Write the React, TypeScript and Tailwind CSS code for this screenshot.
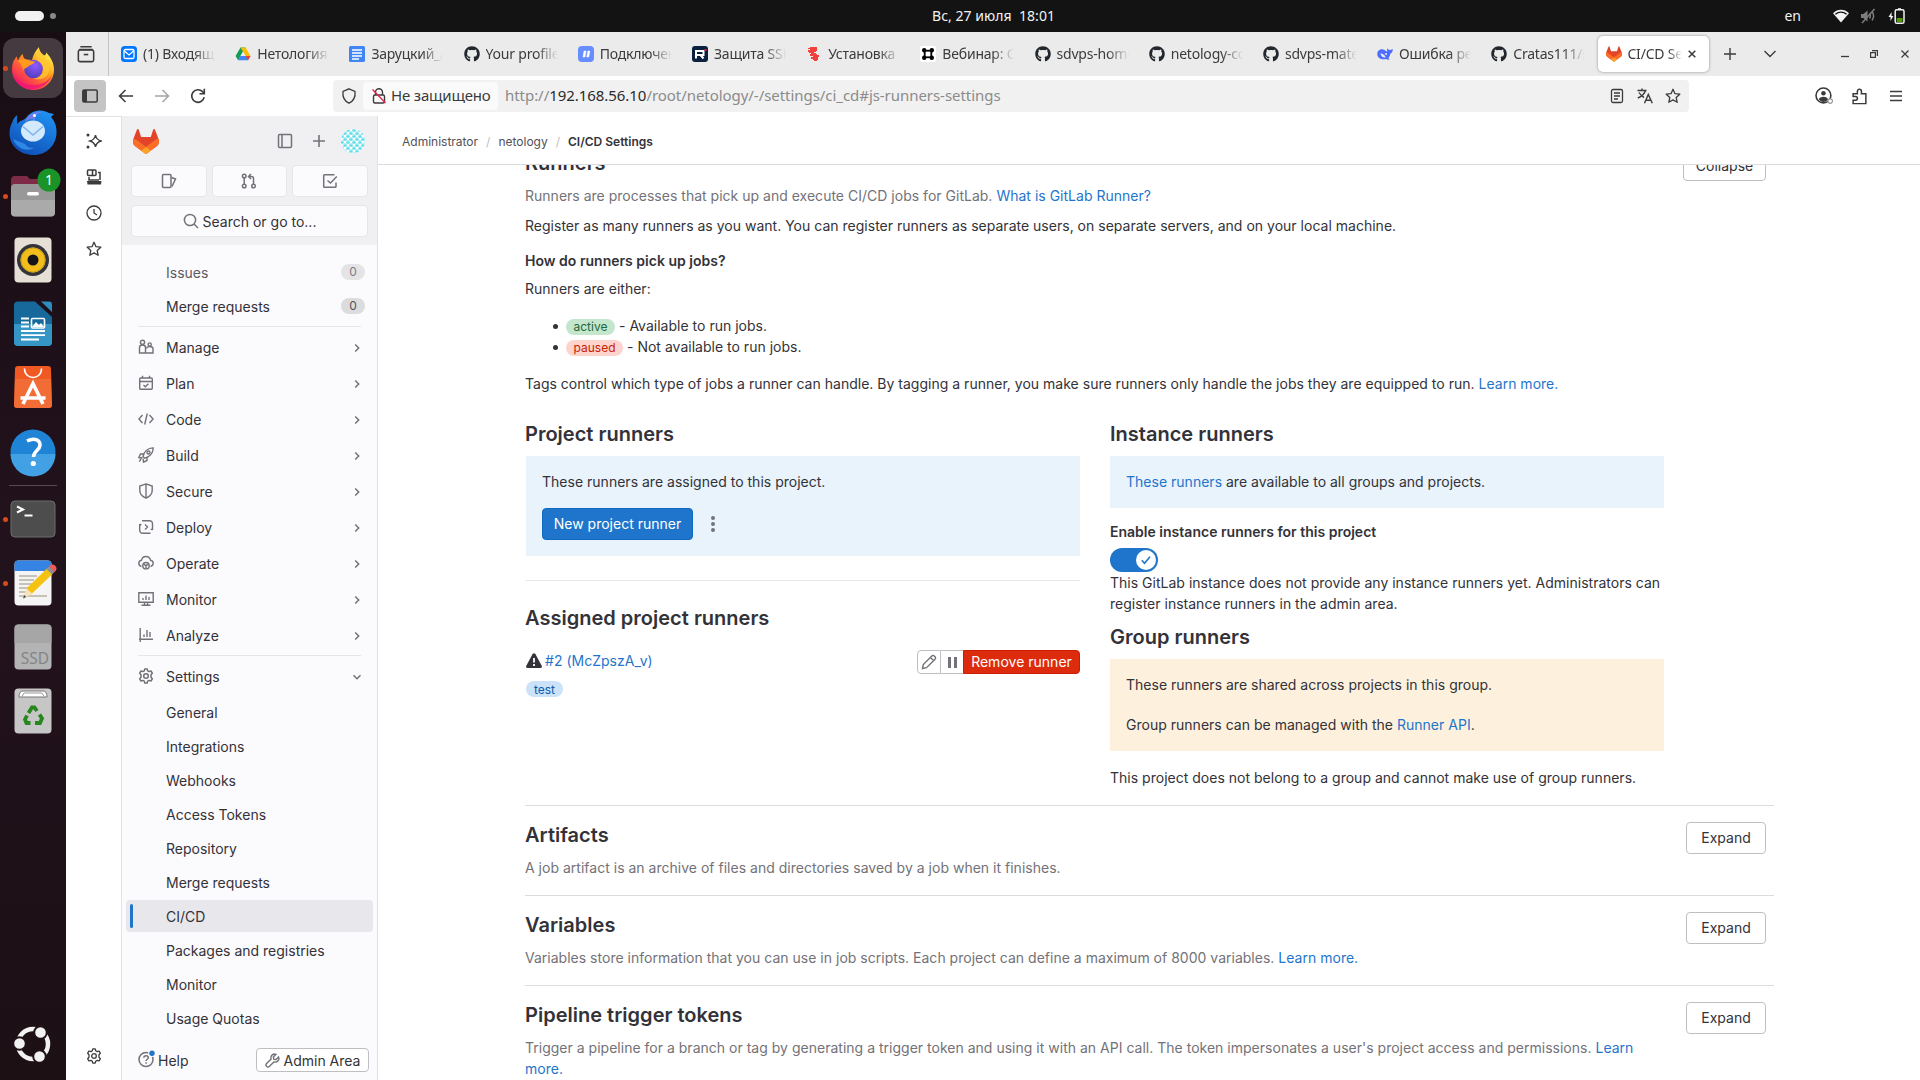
import React from 'react';
import { FaGithub } from 'react-icons/fa';

type Kids = { children?: React.ReactNode };

/* ---------- small helpers ---------- */

function Ico({ children, s = 16, c = '', w = 1.5, vb = '0 0 16 16' }: Kids & { s?: number; c?: string; w?: number; vb?: string }) {
  return (
    <svg width={s} height={s} viewBox={vb} fill="none" stroke="currentColor" strokeWidth={w} className={'shrink-0 ' + c}>
      {children}
    </svg>
  );
}

function Tanuki({ w, h }: { w: number; h: number }) {
  return (
    <svg width={w} height={h} viewBox="0 0 25 24" className="shrink-0">
      <path d="m24.507 9.5-.034-.09L21.082.562a.896.896 0 0 0-1.694.091l-2.29 7.01H7.825L5.535.653a.898.898 0 0 0-1.694-.09L.451 9.411.416 9.5a6.297 6.297 0 0 0 2.09 7.278l.012.01.03.022 5.16 3.867 2.56 1.935 1.554 1.176a1.051 1.051 0 0 0 1.268 0l1.555-1.176 2.56-1.935 5.197-3.89.014-.01A6.297 6.297 0 0 0 24.507 9.5Z" fill="#E24329" />
      <path d="m24.507 9.5-.034-.09a11.44 11.44 0 0 0-4.56 2.051l-7.447 5.632 4.742 3.584 5.197-3.89.014-.01A6.297 6.297 0 0 0 24.507 9.5Z" fill="#FC6D26" />
      <path d="m7.707 20.677 2.56 1.935 1.555 1.176a1.051 1.051 0 0 0 1.268 0l1.555-1.176 2.56-1.935-4.743-3.584-4.755 3.584Z" fill="#FCA326" />
      <path d="M5.01 11.461a11.43 11.43 0 0 0-4.56-2.05L.416 9.5a6.297 6.297 0 0 0 2.09 7.278l.012.01.03.022 5.16 3.867 4.745-3.584-7.444-5.632Z" fill="#FC6D26" />
    </svg>
  );
}

/* ---------- desktop top bar ---------- */

function TopBar() {
  return (
    <div className="relative flex h-8 shrink-0 items-center justify-between bg-[#131313] pl-[15px] pr-[15px] text-[14px] text-[#f2f2f2]">
      <div className="flex items-center gap-[6px]">
        <div className="h-[10px] w-[29px] rounded-full bg-[#f2f2f2]" />
        <div className="size-[6px] rounded-full bg-[#8a8a8a]" />
      </div>
      <div className="absolute left-[932px] top-[5px] whitespace-pre tracking-[0.04px]">Вс, 27 июля  18:01</div>
      <div className="flex items-center">
        <span className="mb-[2px] mr-[31px] text-[14px]">en</span>
        <svg width="18" height="16" viewBox="0 0 18 16" className="mr-[10px]">
          <path d="M1 5.2C5.500.6 12.500.6 17 5.200L9 14.500Z" fill="#f2f2f2" />
          <path d="M3.400 6.200c3.300-2.800 7.900-2.800 11.200 0" stroke="#131313" strokeWidth="1.300" fill="none" />
        </svg>
        <svg width="16" height="16" viewBox="0 0 16 16" className="mr-[12px]" fill="none" stroke="#7d7d7d" strokeWidth="1.500">
          <path d="M1 6h2.500L7.500 2.500v11L3.500 10H1Z" fill="#7d7d7d" stroke="none" />
          <path d="M9.500 5.500c1 1.600 1 3.400 0 5M12 3.500c2 2.800 2 6.200 0 9" />
          <path d="M14.500 1 2 15" />
        </svg>
        <svg width="17" height="18" viewBox="0 0 17 18" fill="none">
          <path d="M3.600 5 .5 10h2v4L5.300 9H3.500Z" fill="#f2f2f2" />
          <path d="M10 1.200h3v1.500h-3z" fill="#f2f2f2" />
          <rect x="7.200" y="2.700" width="8.800" height="13.600" rx="1.600" stroke="#f2f2f2" strokeWidth="1.500" />
          <rect x="8.700" y="11" width="5.800" height="4" fill="#4e9a06" />
        </svg>
      </div>
    </div>
  );
}

/* ---------- dock ---------- */

function DockItem({ children, dot, active }: Kids & { dot?: boolean; active?: boolean }) {
  return (
    <div className="relative flex h-16 w-full shrink-0 items-center justify-center">
      {active && <div className="absolute left-[3px] top-[2px] size-[60px] rounded-[12px] bg-[#463a41]" />}
      {dot && <div className="absolute left-[3px] top-[30px] size-[5px] rounded-full bg-[#d84a1b]" />}
      <svg width="48" height="48" viewBox="0 0 48 48" className="relative overflow-visible" fill="none">
        {children}
      </svg>
    </div>
  );
}

function Dock() {
  return (
    <div className="flex w-[66px] shrink-0 flex-col bg-linear-to-b from-[#190d14] via-[#22121c] to-[#1c1015] pt-[4px]">
      <DockItem dot active>
        <defs>
          <linearGradient id="ffa" x1="38" y1="8" x2="10" y2="42" gradientUnits="userSpaceOnUse">
            <stop offset="0" stopColor="#fff04a" />
            <stop offset=".35" stopColor="#ffa31a" />
            <stop offset=".65" stopColor="#ff5a3c" />
            <stop offset="1" stopColor="#f0156a" />
          </linearGradient>
          <radialGradient id="ffb" cx=".6" cy=".3" r=".8">
            <stop offset="0" stopColor="#9059ff" />
            <stop offset="1" stopColor="#4a3bb5" />
          </radialGradient>
        </defs>
        <path d="M30 3c-.5 4 2.500 6 5 8.500 1.800-.3 2-1.500 2.300-3 4.500 5 7.700 10.500 7.700 17C45 37.500 35.500 46 24.500 46S3 37.500 3 25.500C3 19 5.500 14.500 8 12.500c0 2 .5 3 1 4C10 14 11.500 11.500 14 10c-.3 2 .5 4.500 3 5.500l6 .5c1-4 3-9 7-13Z" fill="url(#ffa)" />
        <path d="M4 31c3 9 10.500 14 19 14 10 0 18-6.500 20.500-15C40 37 33 41 25 41S9 38 4 31Z" fill="#f0147a" opacity=".75" />
        <circle cx="24.500" cy="25" r="9.300" fill="url(#ffb)" />
        <path d="M9 16.500c4-2 9-1.500 12 .5l5 .5c-1 3-4.500 3-6 4.500-2 1.800-4 2-6 4 0-4-2.500-6-5-9.500Z" fill="#ff9a1f" />
        <path d="M29 17c4 2 6 6 5 10-1 4.500-5 7.500-9.500 7.500 8 3 16-2 16-11C40 16 33 14 30 4c-3 4-3.500 9-1 13Z" fill="#ffc936" opacity=".75" />
      </DockItem>
      <DockItem>
        <defs>
          <linearGradient id="tb" x1="36" y1="4" x2="14" y2="46" gradientUnits="userSpaceOnUse">
            <stop offset="0" stopColor="#1f8ff0" />
            <stop offset="1" stopColor="#0f50b8" />
          </linearGradient>
        </defs>
        <path d="M17 10C22 2 33 .5 40 5l5 1-3 3c4 4.500 6 10 5.500 17C46.500 38 37 47 25 47 11 47 1 38 .5 26c0-5 1-9 3-12 .5-2.500 2-5 5-7-1 2.500-.3 6-.3 9l3-3C13 13 15 11.500 17 10Z" fill="url(#tb)" />
        <path d="M17 11C21 5 29 3 34 4c-6 1-9 4-8 8-4-2-7-1-10 3Z" fill="#8a7be8" opacity=".8" />
        <circle cx="25.500" cy="7.500" r="1.500" fill="#fff" />
        <ellipse cx="24" cy="23" rx="12" ry="10.500" fill="#d3e9fd" />
        <path d="M14 18.500 24 27l10-8.500" stroke="#7fb4ea" strokeWidth="1.600" />
        <path d="M4 31c4 10 14 13 21 9-4 0-7-1-9-4" fill="#3c9df5" opacity=".7" />
      </DockItem>
      <DockItem dot>
        <path d="M2 8q0-4 4-4h12l3 3h18q4 0 4 4v12H2Z" fill="#7d2b46" />
        <rect x="2" y="12" width="44" height="32.500" rx="4" fill="#989898" />
        <path d="M2 28h44v12.500q0 4-4 4H6q-4 0-4-4Z" fill="#b5b5b5" opacity=".6" />
        <rect x="18" y="20" width="12" height="3.500" rx="1.700" fill="#fff" />
        <circle cx="40" cy="8" r="11.500" fill="#1a9428" />
        <text x="40" y="13" textAnchor="middle" fontSize="14" fill="#fff" fontFamily="Noto Sans">1</text>
      </DockItem>
      <DockItem>
        <rect x="5.500" y="1.500" width="37" height="45" rx="4" fill="#e5dfd5" />
        <circle cx="24" cy="24" r="16" fill="#33333b" />
        <circle cx="24" cy="24" r="12.500" fill="#f3bd1c" />
        <circle cx="24" cy="24" r="12" stroke="#caa01c" strokeWidth="1" />
        <circle cx="24" cy="24" r="5.500" fill="#151519" />
      </DockItem>
      <DockItem>
        <path d="M9 1.500h17L43 17v25q0 4-4 4H9q-4 0-4-4V5.500q0-4 4-4Z" fill="#17699c" />
        <path d="M5 24h38v18q0 4-4 4H9q-4 0-4-4Z" fill="#3596c6" />
        <path d="M32 1.500h8q3 0 3 3V12Z" fill="#2f8cbf" />
        <rect x="22.500" y="18.500" width="13" height="9.500" rx="1" stroke="#fff" strokeWidth="1.600" />
        <path d="m23 27 4-5 3 3 2-2 3 4Z" fill="#fff" />
        <path d="M12 18.500h8M12 22.500h8M12 26.500h8M12 31h24M12 35.200h24M12 39.500h18" stroke="#fff" strokeWidth="1.800" />
      </DockItem>
      <DockItem>
        <path d="M9 2h30q3 0 3 3l1 36q0 3-3 3H8q-3 0-3-3L6 5q0-3 3-3Z" fill="#f05a22" />
        <path d="M6 15h36l1 26q0 3-3 3H8q-3 0-3-3Z" fill="#f47a45" opacity=".6" />
        <path d="M15.500 4.500c0 12 17 12 17 0" stroke="#fff" strokeWidth="1.600" />
        <path d="M14 40 24 19.500 34 40M11.500 34h25" stroke="#fff" strokeWidth="3.600" />
      </DockItem>
      <DockItem>
        <circle cx="24" cy="24" r="22.500" fill="#1f83d6" />
        <path d="M1.500 26a22.500 22.500 0 0 0 45 0Z" fill="#42a0e4" />
        <path d="M18 13c8-4 13.500-.5 13 4.500-.5 5-6.500 5.500-6.500 11.500" stroke="#fff" strokeWidth="3.500" />
        <circle cx="24.300" cy="35.500" r="2.600" fill="#fff" />
      </DockItem>
      <div className="mx-[9px] mb-[1px] mt-[1px] h-px shrink-0 bg-[#56494f]" />
      <DockItem dot>
        <rect x="2" y="6" width="44" height="36" rx="4" fill="#4d4d4d" stroke="#6a6f6a" strokeWidth="1" />
        <path d="m8 11.500 6 3-6 3M15.500 20.500h8" stroke="#fff" strokeWidth="2" />
      </DockItem>
      <DockItem dot>
        <rect x="5.500" y="1.500" width="37" height="45" rx="4" fill="#f4f4f4" />
        <path d="M5.500 12V5.500q0-4 4-4h29q4 0 4 4V12Z" fill="#3584e4" />
        <path d="M10 17h18M10 21h15M10 25h16M10 29h12M10 33h8M10 37h28" stroke="#c7c2b8" strokeWidth="1.800" />
        <path d="m16 35 2-6L38 9.500l5.500 5.500L22 35.500Z" fill="#f5c211" />
        <path d="m14 39.500 3.500-10 6 5.500Z" fill="#f6e3b8" />
        <path d="m14 39.500 1.200-3.500 2 2Z" fill="#444" />
        <path d="m40 7.500 1.500-1.500q2-1 4 0l1.700 2q1 2-.5 4L45 13.500Z" fill="#ed5b5b" />
        <path d="m37.500 10 2.500-2.500 5.300 5.500-2.300 2.500Z" fill="#8f8f8f" />
      </DockItem>
      <DockItem>
        <rect x="5.500" y="1.500" width="37" height="45" rx="4" fill="#b4b4b4" />
        <path d="M5.500 20V5.500q0-4 4-4h29q4 0 4 4V20Z" fill="#a6a6a6" />
        <text x="26" y="41" textAnchor="middle" fontSize="15.500" fill="#858585" fontFamily="Noto Sans">SSD</text>
      </DockItem>
      <DockItem>
        <rect x="5.500" y="1.500" width="37" height="45" rx="4" fill="#c6c6c6" />
        <path d="M10 10q0-6 4-6h20q4 0 4 6Z" fill="#fff" stroke="#777" strokeWidth="1" />
        <path d="M13 9.500 15 6h18l2 3.500" stroke="#9a9a9a" strokeWidth="1" />
        <g stroke="#26871c" strokeWidth="3.800">
          <path d="m19.500 26 3.500-5.500h2.500L28 24" />
          <path d="m30.500 27.500 2.500 4-2 4.500h-5" />
          <path d="M21.500 36h-4l-1.500-3.500 2-4" />
        </g>
      </DockItem>
      <div className="mt-auto flex justify-center pb-[13px]">
        <svg width="46" height="46" viewBox="0 0 46 46" fill="none">
          <circle cx="23" cy="23" r="15" stroke="#f2f2f2" strokeWidth="4.500" />
          <g fill="#f2f2f2" stroke="#1f1218" strokeWidth="2">
            <circle cx="9.500" cy="22.500" r="6.300" />
            <circle cx="30.500" cy="11.500" r="6.300" />
            <circle cx="29.500" cy="35.500" r="6.300" />
          </g>
        </svg>
      </div>
    </div>
  );
}

/* ---------- browser chrome ---------- */

const MailIcon = () => (
  <svg width="16" height="16" viewBox="0 0 16 16" fill="none" className="shrink-0">
    <rect width="16" height="16" rx="3.500" fill="#07f" />
    <rect x="3" y="3.500" width="10" height="9" rx="1.500" stroke="#fff" strokeWidth="1.300" />
    <path d="m3.500 5 4.500 4 4.500-4" stroke="#fff" strokeWidth="1.300" />
  </svg>
);
const DriveIcon = () => (
  <svg width="16" height="16" viewBox="0 0 16 16" className="shrink-0">
    <path d="M5.500 1.500h5l-5 8.500-2.400 4.200L.6 10Z" fill="#0f9d58" />
    <path d="M5.500 1.500h5l5 8.500h-5Z" fill="#fbbc04" />
    <path d="M5.300 10h10.200L13 14.300H3Z" fill="#4285f4" />
    <path d="M10.500 10h5L13 14.300Z" fill="#ea4335" />
    <path d="m8 5.700 2.500 4.300h-5Z" fill="#ebebeb" />
  </svg>
);
const DocIcon = () => (
  <svg width="16" height="16" viewBox="0 0 16 16" className="shrink-0">
    <rect width="16" height="16" rx="1.500" fill="#4285f4" />
    <path d="M3 4h10M3 7h10M3 10h10M3 13h7" stroke="#fff" strokeWidth="1.500" />
  </svg>
);
const SlashIcon = () => (
  <svg width="16" height="16" viewBox="0 0 16 16" className="shrink-0">
    <rect width="16" height="16" rx="4" fill="#668dff" />
    <path d="m5 11 1-6h2l-1 6ZM8.800 11l1-6h2l-1 6Z" fill="#fff" stroke="#fff" strokeWidth=".5" />
  </svg>
);
const RIcon = () => (
  <svg width="16" height="16" viewBox="0 0 16 16" fill="none" className="shrink-0">
    <rect width="16" height="16" rx="3" fill="#0b1f3f" />
    <path d="M4 12.500V5h7.500v4H4.500M8.500 9l3 3.500" stroke="#fff" strokeWidth="2" />
    <path d="M12.500 3h2v2h-2z" fill="#e5173f" />
  </svg>
);
const PixelIcon = () => (
  <svg width="16" height="16" viewBox="0 0 16 16" fill="#f2403d" className="shrink-0">
    <path d="M2 2h2V1h7v4h-1v1H8v1h2v1h1v1h2v2h-1v3h-1v1H8v-1H7v-1H5v-2h2v-1H4V8h1V7H3V6H2V4h2V3H2Z" />
  </svg>
);
const KnotIcon = () => (
  <svg width="16" height="16" viewBox="0 0 16 16" fill="none" className="shrink-0">
    <rect width="16" height="16" rx="2" fill="#fff" />
    <rect x="4.700" y="4.700" width="6.600" height="6.600" stroke="#000" strokeWidth="1.800" />
    <g fill="#000">
      <circle cx="4.200" cy="4.200" r="2.200" />
      <circle cx="11.800" cy="4.200" r="2.200" />
      <circle cx="4.200" cy="11.800" r="2.200" />
      <circle cx="11.800" cy="11.800" r="2.200" />
    </g>
  </svg>
);
const WhaleIcon = () => (
  <svg width="16" height="16" viewBox="0 0 16 16" className="shrink-0">
    <path d="M.3 8C.3 4.500 3 3 5.500 3.200 7.500 3.400 8.500 5 10.200 5.700c.2-1.200-.4-2.200-.2-3.200 1 .3 1.700 1 2.200 1.600 1 .1 2.300-.2 3.500-1.100.2 2.500-.8 4.200-2.400 4.700-.2 2-1 3.500-2 4.300l1.300 1.300c-1.500.8-2.600.2-3.500-.3C4.500 14.300.3 12 .3 8Z" fill="#4d6bfe" />
    <path d="M3.500 7.200c2.500 0 4.500 2.500 5.300 4.300C6 12 3.500 10 3.500 7.200Z" fill="#ebebeb" />
    <circle cx="9" cy="8" r="1" fill="#ebebeb" />
  </svg>
);
const Hub = () => <FaGithub size={16} color="#22272e" className="shrink-0" />;

const TABS: [() => React.ReactElement, string][] = [
  [MailIcon, '(1) Входящие'],
  [DriveIcon, 'Нетология —'],
  [DocIcon, 'Заруцкий_А'],
  [Hub, 'Your profile'],
  [SlashIcon, 'Подключен'],
  [RIcon, 'Защита SSH'],
  [PixelIcon, 'Установка и'],
  [KnotIcon, 'Вебинар: Ci'],
  [Hub, 'sdvps-home'],
  [Hub, 'netology-co'],
  [Hub, 'sdvps-mater'],
  [WhaleIcon, 'Ошибка рег'],
  [Hub, 'Cratas111/s'],
];

function TabStrip() {
  return (
    <div className="flex h-11 shrink-0 items-center bg-[#ebebeb] text-[14px] text-[#3b3b3b]">
      <div className="mr-[6px] flex h-full w-[43px] shrink-0 items-center justify-center border-r border-[#c4c4c4]">
        <Ico s={18} w={1.400} c="mr-[3px]">
          <path d="M3 1.500h10M2 4h12" />
          <rect x="1.200" y="4.500" width="13.600" height="10.300" rx="1.500" />
          <path d="M6 8.500h4" />
        </Ico>
      </div>
      {TABS.map(([Icon, label], i) => (
        <div key={i} className="flex w-[114.200px] shrink-0 items-center gap-[6px] pl-[6px]">
          <Icon />
          <div className="mb-[2px] w-[72px] overflow-hidden whitespace-nowrap tracking-[-0.2px] [mask-image:linear-gradient(to_right,#000_70%,transparent)]">{label}</div>
        </div>
      ))}
      <div className="-ml-[1px] flex h-9 w-[111px] shrink-0 items-center gap-[6px] rounded-[5px] bg-white pl-[8px] shadow-[0_0_3px_rgba(0,0,0,0.4)]">
        <Tanuki w={16} h={16} />
        <div className="-ml-px mb-[2px] w-[55px] overflow-hidden whitespace-nowrap tracking-[-0.2px] [mask-image:linear-gradient(to_right,#000_75%,transparent)]">CI/CD Settings</div>
        <Ico s={8} w={1.500} vb="0 0 8 8">
          <path d="m.7.7 6.600 6.600M7.300.7.7 7.300" />
        </Ico>
      </div>
      <Ico s={12} w={1.400} vb="0 0 12 12" c="ml-[15px]">
        <path d="M6 0v12M0 6h12" />
      </Ico>
      <Ico s={12} w={1.400} vb="0 0 12 12" c="ml-[28px]">
        <path d="m.5 3 5.500 5.500L11.500 3" />
      </Ico>
      <Ico s={8} w={1.300} vb="0 0 8 8" c="ml-[65px]">
        <path d="M0 6.500h8" />
      </Ico>
      <Ico s={8} w={1.200} vb="0 0 8 8" c="ml-[21px]">
        <path d="M.6 2.600h4.800v4.800H.6ZM2 .6h5.400V6" />
      </Ico>
      <Ico s={8} w={1.200} vb="0 0 8 8" c="ml-[23px]">
        <path d="m.5.5 7 7M7.500.5l-7 7" />
      </Ico>
    </div>
  );
}

const STAR = 'm8 1.300 2 4.400 4.800.5-3.600 3.300 1 4.800L8 11.900l-4.200 2.400 1-4.800L1.200 6.200 6 5.700Z';

function NavBar() {
  return (
    <div className="flex h-10 shrink-0 items-center bg-white pl-2 text-[15px] text-[#3b3b3b]">
      <div className="flex size-8 shrink-0 items-center justify-center rounded-[4px] bg-[#c4c4c4]">
        <Ico w={1.500}>
          <rect x=".8" y="2" width="14.400" height="12" rx="1.300" />
          <path d="M1 2h4v12H1Z" fill="currentColor" stroke="none" />
        </Ico>
      </div>
      <Ico c="ml-[12px]" w={1.500}>
        <path d="M15 8H1.500M7.500 2 1.500 8l6 6" />
      </Ico>
      <Ico c="ml-[20px] text-[#a5a5a5]" w={1.500}>
        <path d="M1 8h13.500M8.500 2l6 6-6 6" />
      </Ico>
      <Ico c="ml-[20px]" w={1.600}>
        <path d="M14.200 9.200A6.300 6.300 0 1 1 12.500 3.600L14 5M14.300.8v5H9.500" />
      </Ico>
      <div className="ml-[127px] flex h-8 w-[1356px] items-center rounded-[4px] bg-[#f1f1f1] pl-2">
        <Ico w={1.300}>
          <path d="M8 .8 14 3.500c.6 5-1.500 9.500-6 11.700C3.500 13 1.400 8.500 2 3.500Z" />
        </Ico>
        <div className="ml-[6px] flex h-7 w-[135px] items-center gap-[4px] rounded-[4px] bg-[#fafafa] pl-[8px]">
          <Ico w={1.400}>
            <rect x="2.500" y="7" width="11" height="8" rx="1.500" />
            <path d="M4.500 7V4.300a3.500 3.500 0 0 1 7 0V7" />
            <path d="m1.500 1.500 13 13.500" stroke="#e22850" />
          </Ico>
          <span className="mb-[2px] whitespace-nowrap tracking-[-0.18px]">Не защищено</span>
        </div>
        <div className="mb-[2px] ml-[7px] flex-1 whitespace-nowrap tracking-[-0.05px] text-[#8b8b8b]">
          http://<span className="text-[#2b2b2b]">192.168.56.10</span>/root/netology/-/settings/ci_cd#js-runners-settings
        </div>
        <div className="flex items-center gap-[12px] pr-[8px]">
          <Ico w={1.300}>
            <rect x="2.500" y="1.500" width="11" height="13" rx="1.500" />
            <path d="M5 5h6M5 8h6M5 11h4" />
          </Ico>
          <Ico w={1.400}>
            <path d="M.5 2.500h9M5 .5v2M8.500 2.500C7.500 6 4.500 8.500.8 10M2 4.500C3.500 7 5 8.500 7 9.500M7.500 15.200 11.300 6.500l4 8.700M8.800 12.300h5.200" />
          </Ico>
          <Ico w={1.300}>
            <path d={STAR} strokeLinejoin="round" />
          </Ico>
        </div>
      </div>
      <div className="ml-[126px] flex items-center gap-[20px]">
        <Ico s={18} w={1.400} c="-mr-[2px]">
          <circle cx="7.500" cy="7.500" r="6.600" />
          <circle cx="7.500" cy="5.500" r="2" fill="currentColor" stroke="none" />
          <path d="M3.500 11c0-3 8-3 8 0-2 3-6 3-8 0Z" fill="currentColor" stroke="none" />
          <circle cx="13.500" cy="12.500" r="2" stroke="#999" fill="#fff" strokeWidth="1" />
        </Ico>
        <Ico s={17} w={1.400}>
          <path d="M2 5.500h4V3a1.900 1.900 0 0 1 3.800 0v2.500H14v9.200H2v-3.200h2.300a1.700 1.700 0 0 0 0-3.500H2Z" />
        </Ico>
        <Ico w={1.400}>
          <path d="M2 3.500h12M2 8h12M2 12.500h12" />
        </Ico>
      </div>
    </div>
  );
}

function BrowserRail() {
  return (
    <div className="flex w-[55px] shrink-0 flex-col items-center gap-[20px] bg-white pt-[16px] text-[#3b3b3b]">
      <Ico w={1.400}>
        <path d="M9.500 2c.6 3.700 2 5 5.500 6-3.500 1-4.900 2.300-5.500 6C8.900 10.300 7.500 9 4 8c3.500-1 4.900-2.300 5.500-6Z" />
        <circle cx="2" cy="2" r="1.500" fill="currentColor" stroke="none" />
        <circle cx="2" cy="14" r="1.500" fill="currentColor" stroke="none" />
      </Ico>
      <Ico w={1.500}>
        <rect x="1.500" y="1" width="8.500" height="5.500" rx="1" />
        <path d="M6.500 1v5M12 3.500h2V11M3 8v3h10" />
        <path d="M1 12h14.500l-.5 3.500H1.500Z" fill="currentColor" stroke="none" />
      </Ico>
      <Ico w={1.300}>
        <circle cx="8" cy="8" r="7" />
        <path d="M8 4v4l3 2" />
      </Ico>
      <Ico w={1.300}>
        <path d={STAR} strokeLinejoin="round" />
      </Ico>
      <div className="mb-[16px] mt-auto">
        <Gear w={1.300} />
      </div>
    </div>
  );
}

function Gear({ w }: { w: number }) {
  return (
    <Ico w={w}>
      <path d="M6.300 2.800 6.800.9h2.400l.5 1.900 1.400.8 1.900-.6 1.300 2.200-1.300 1.500v2.600l1.300 1.500-1.300 2.200-1.900-.6-1.400.8-.5 1.900H6.800l-.5-1.900-1.400-.8-1.900.6-1.300-2.200L3 9.300V6.700L1.700 5.200 3 3l1.900.6Z" strokeLinejoin="round" />
      <circle cx="8" cy="8" r="2.300" />
    </Ico>
  );
}

/* ---------- GitLab sidebar ---------- */

const NAV: [string, React.ReactNode][] = [
  ['Manage', <g key="a"><circle cx="4.500" cy="3.300" r="2.100" /><circle cx="11.700" cy="5.500" r="1.600" /><path d="M1.500 14V8.500q0-2.500 3-2.500t3 2.500V14ZM7.500 14H15v-4q0-2.500-3.300-2.500T9 9.500" /></g>],
  ['Plan', <g key="b"><rect x="1.700" y="3" width="12.600" height="11.300" rx="1" /><path d="M1.700 6.500h12.600M4.500.8V3M11.500.8V3m-6 7 1.800 1.700L10.500 8.800" /></g>],
  ['Code', <path key="c" d="M4.500 4 .9 8l3.600 4M11.500 4l3.600 4-3.600 4M9.300 2.500l-2.600 11" />],
  ['Build', <g key="d"><path d="M5 9.500C6 5 9.500 1 15.200.9 15.200 6.500 11 10 6.700 11.200ZM5.500 7H2.500L.9 10.500l3.500.2M9 10.500v3L5.500 15.200l-.3-3.500M3.500 11l-2.200 3.700" /><circle cx="10.500" cy="5.500" r="1.500" /></g>],
  ['Secure', <path key="e" d="M8 .9 14.200 3v4.500c0 3.500-2.500 6-6.200 7.700-3.700-1.700-6.200-4.200-6.200-7.700V3ZM8 1v14" />],
  ['Deploy', <path key="f" d="M4 1.700h7.500a3 3 0 0 1 3 3V11m-2 3.300H4.700a3 3 0 0 1-3-3V5M7 5.500 9.500 8 7 10.500M14.500 11l-1.800-1M1.700 5l1.700 1" />],
  ['Operate', <g key="g"><path d="M3.500 11.500C1.700 11 .8 9.800.8 8.300c0-1.700 1.200-2.900 2.700-3.100C4 3 5.700 1.500 8 1.500s4 1.500 4.500 3.700c1.500.2 2.700 1.400 2.700 3.100 0 1.500-.9 2.700-2.700 3.200" /><circle cx="8" cy="10.700" r="3.200" /><path d="m5.500 9.300 2.500 1.200 2.500-1.200M8 10.500v3" /></g>],
  ['Monitor', <path key="h" d="M.8 1.800h14.400v9.400H.8ZM3.500 14.300h9M6.500 11.500v2.500M9.500 11.500v2.500M5 7v2M8 4.500V9M11 6v3" />],
  ['Analyze', <path key="i" d="M2.200 1v14M1 12.200h14M6 7.500V10M9 3v7M12 5v5" />],
];

const SETTINGS = ['General', 'Integrations', 'Webhooks', 'Access Tokens', 'Repository', 'Merge requests', 'CI/CD', 'Packages and registries', 'Monitor', 'Usage Quotas'];

function Count({ faded }: { faded?: boolean }) {
  return (
    <span className={'ml-auto flex h-4 w-6 items-center justify-center rounded-full text-[12px] ' + (faded ? 'bg-[#e4e4e6] text-[#7c7b81]' : 'bg-[#dcdcde] text-[#535158]')}>
      0
    </span>
  );
}

const CELLS = Array.from({ length: 64 }, (_, i) => [i % 8, Math.floor(i / 8)]);

function GitLabSidebar() {
  return (
    <div className="flex w-[257px] shrink-0 flex-col border-l border-r border-[#e2e2e6] bg-[#fbfafd] text-[14px] text-[#333238]">
      <div className="h-[129px] shrink-0 bg-[#f0f0f3] px-[9px] pt-[13px]">
        <div className="flex h-6 items-center pl-[2px]">
          <Tanuki w={26} h={25} />
          <Ico c="ml-[118px] text-[#737278]" w={1.500}>
            <rect x="1.500" y="1.500" width="13" height="13" rx="1.200" />
            <path d="M5 1.500v13" />
          </Ico>
          <Ico c="ml-[18px] text-[#737278]" w={1.600}>
            <path d="M8 2v12M2 8h12" />
          </Ico>
          <svg width="24" height="24" viewBox="0 0 24 24" className="ml-[14px] shrink-0">
            <clipPath id="av">
              <circle cx="12" cy="12" r="12" />
            </clipPath>
            <g clipPath="url(#av)">
              <rect width="24" height="24" fill="#b9f0f6" />
              {CELLS.map(([x, y], i) => (
                <path key={i} d={(x + y) % 2 ? `M${x * 3} ${y * 3}h2v2h-2z` : `M${x * 3 + 1} ${y * 3}v3m-1.500-1.500h3`} fill={(x + y) % 2 ? '#fff' : 'none'} stroke={(x + y) % 2 ? 'none' : '#5ddbe8'} strokeWidth="1" />
              ))}
            </g>
          </svg>
        </div>
        <div className="mt-[12px] grid grid-cols-3 gap-[5px] text-[#737278]">
          <div className="flex h-8 items-center justify-center rounded-[4px] border border-[#e6e6ea] bg-[#fbfafd]">
            <Ico w={1.500}>
              <rect x="1.500" y="1.500" width="8.500" height="13" rx="1" />
              <path d="m10.500 4.500 4 1.500-3.500 7.500" />
            </Ico>
          </div>
          <div className="flex h-8 items-center justify-center rounded-[4px] border border-[#e6e6ea] bg-[#fbfafd]">
            <Ico w={1.500}>
              <circle cx="3.200" cy="3" r="1.800" />
              <circle cx="3.200" cy="13" r="1.800" />
              <circle cx="12.500" cy="13" r="1.800" />
              <path d="M3.200 5v6M12.500 11V5.500q0-2-2-2H8M10 1 7.500 3.500 10 6" />
            </Ico>
          </div>
          <div className="flex h-8 items-center justify-center rounded-[4px] border border-[#e6e6ea] bg-[#fbfafd]">
            <Ico w={1.500}>
              <path d="M12.500 1.700h-10q-.8 0-.8.800v11q0 .8.8.8h10.700q.8 0 .8-.8V9.500M5.500 7.500 8.500 10l6.300-6.500" />
            </Ico>
          </div>
        </div>
        <div className="mt-2 flex h-8 items-center justify-center gap-[4px] rounded-[4px] border border-[#e6e6ea] bg-[#fbfafd]">
          <Ico c="text-[#737278]" w={1.500}>
            <circle cx="7" cy="7" r="5.600" />
            <path d="m11 11 4 4" />
          </Ico>
          <span>Search or go to...</span>
        </div>
      </div>
      <div className="flex flex-1 flex-col overflow-hidden px-1">
        <div className="mt-[11px] flex h-8 shrink-0 items-center pl-10 pr-[8px] text-[#5c5b61]">
          Issues
          <Count faded />
        </div>
        <div className="mt-[2px] flex h-8 shrink-0 items-center pl-10 pr-[8px]">
          Merge requests
          <Count />
        </div>
        <div className="mx-3 mb-[5px] mt-[4px] h-px shrink-0 bg-[#e6e6ea]" />
        {NAV.map(([label, icon]) => (
          <div key={label} className="mb-1 flex h-8 shrink-0 items-center pl-3 pr-2">
            <Ico c="mb-[2px] text-[#737278]" w={1.400}>
              {icon}
            </Ico>
            <span className="mb-[2px] ml-3">{label}</span>
            <Ico c="ml-auto text-[#737278]" w={1.500}>
              <path d="m6.200 4.500 3.500 3.500-3.500 3.500" />
            </Ico>
          </div>
        ))}
        <div className="mx-3 mb-[5px] -mt-[1px] h-px shrink-0 bg-[#e6e6ea]" />
        <div className="mb-[3px] flex h-8 shrink-0 items-center pl-3 pr-2">
          <div className="mb-[2px] text-[#737278]">
            <Gear w={1.500} />
          </div>
          <span className="mb-[2px] ml-3">Settings</span>
          <Ico c="ml-auto text-[#737278]" w={1.500}>
            <path d="m4.500 6.200 3.500 3.500 3.500-3.500" />
          </Ico>
        </div>
        {SETTINGS.map((s) => (
          <div key={s} className={'mb-[2px] flex h-8 shrink-0 items-center rounded-[4px] ' + (s === 'CI/CD' ? 'bg-[#e8e7ec]' : '')}>
            <div className={'ml-1 h-6 w-[3px] rounded-full ' + (s === 'CI/CD' ? 'bg-[#1f75cb]' : '')} />
            <span className="ml-[33px]">{s}</span>
          </div>
        ))}
      </div>
      <div className="flex h-10 shrink-0 items-center pl-[15px] pr-2">
        <svg width="18" height="18" viewBox="0 0 18 18" fill="none" className="-mt-[2px]">
          <circle cx="9" cy="9.500" r="7" stroke="#737278" strokeWidth="1.500" />
          <path d="M6.800 7.700C7 5 11.300 5 11.300 7.700 11.300 9.300 9.100 9.200 9.100 11M9.100 12.200v1.500" stroke="#737278" strokeWidth="1.500" />
          <circle cx="15" cy="3.200" r="3.300" fill="#1f75cb" stroke="#fbfafd" strokeWidth="1.200" />
        </svg>
        <span className="ml-[3px]">Help</span>
        <div className="ml-auto flex h-6 w-[113px] items-center justify-center gap-[4px] rounded-[4px] border border-[#bfbfc3] bg-white">
          <Ico s={15} c="text-[#737278]" w={1.500}>
            <path d="M14.500 4.200 11.800 7 9.300 6.500 8.900 4.200l2.800-2.800C9 .3 5.500 2.500 6.500 6.500L1.500 11.500c-1.500 1.700 1.200 4.700 3 3L9.500 9.500c4 1 6.200-2.500 5-5.300Z" />
          </Ico>
          <span>Admin Area</span>
        </div>
      </div>
    </div>
  );
}

/* ---------- page content ---------- */

const A = ({ children }: Kids) => <span className="text-[#1f75cb]">{children}</span>;
const H = ({ children, c = '' }: Kids & { c?: string }) => <h4 className={'text-[20px] font-semibold leading-6 ' + c}>{children}</h4>;

function Section({ title, children, last }: Kids & { title: string; last?: boolean }) {
  return (
    <section className={'relative border-t border-[#dcdcde] pt-[17px] ' + (last ? '' : 'h-[90px]')}>
      <H>{title}</H>
      <p className="mt-[10px] w-[1130px] text-[#737278]">{children}</p>
      <div className="absolute right-[8px] top-4 flex h-8 w-20 items-center justify-center rounded-[4px] border border-[#bfbfc3] pb-[1px]">Expand</div>
    </section>
  );
}

function Content() {
  return (
    <div className="flex flex-1 flex-col overflow-hidden bg-white text-[#333238]">
      <div className="flex h-[49px] shrink-0 items-center border-b border-[#dcdcde] pl-6 pt-[3px] text-[12px] text-[#535158]">
        <span>Administrator</span>
        <span className="mx-[8px] text-[#bfbfc3]">/</span>
        <span>netology</span>
        <span className="mx-[8px] text-[#bfbfc3]">/</span>
        <span className="font-semibold text-[#333238]">CI/CD Settings</span>
      </div>
      <div className="flex-1 overflow-hidden">
        <div className="-mt-[14px] ml-[147px] w-[1249px] text-[14px] leading-[21px] tracking-[0.012px]">
          <div className="relative">
            <H>Runners</H>
            <div className="absolute -top-[2px] right-[8px] flex h-8 w-[83px] items-center justify-center rounded-[4px] border border-[#bfbfc3]">Collapse</div>
          </div>
          <p className="mt-[10px] text-[#737278]">
            Runners are processes that pick up and execute CI/CD jobs for GitLab. <A>What is GitLab Runner?</A>
          </p>
          <p className="mt-[9px]">Register as many runners as you want. You can register runners as separate users, on separate servers, and on your local machine.</p>
          <p className="mt-[14px] font-semibold">How do runners pick up jobs?</p>
          <p className="mt-[7px]">Runners are either:</p>
          <ul className="mt-4">
            <li className="flex items-center">
              <span className="ml-[28px] mr-[8px] mt-[2px] size-[5px] rounded-full bg-[#333238]" />
              <span className="mr-[4px] mt-[2px] h-4 w-[49px] rounded-full bg-[#c3e6cd] text-center text-[12px] leading-4 text-[#24663b]">active</span>- Available to run jobs.
            </li>
            <li className="flex items-center">
              <span className="ml-[28px] mr-[8px] mt-[2px] size-[5px] rounded-full bg-[#333238]" />
              <span className="mr-[4px] mt-[2px] h-4 w-[57px] rounded-full bg-[#fdd4cd] text-center text-[12px] leading-4 text-[#c91c00]">paused</span>- Not available to run jobs.
            </li>
          </ul>
          <p className="mt-4">
            Tags control which type of jobs a runner can handle. By tagging a runner, you make sure runners only handle the jobs they are equipped to run. <A>Learn more.</A>
          </p>
          <div className="mt-[28px] flex h-[383px] gap-[30px]">
            <div className="ml-[1px] w-[554px]">
              <H c="-ml-px">Project runners</H>
              <div className="mt-[10px] h-[100px] bg-[#e9f3fc] px-4 pt-[15px]">
                <p>These runners are assigned to this project.</p>
                <div className="mt-4 flex items-center">
                  <div className="flex h-8 w-[151px] items-center justify-center rounded-[4px] border border-[#1068bf] bg-[#1f75cb] pb-[1px] text-white">New project runner</div>
                  <svg width="16" height="16" viewBox="0 0 16 16" fill="#737278" className="ml-[12px]">
                    <circle cx="8" cy="2" r="2" />
                    <circle cx="8" cy="8" r="2" />
                    <circle cx="8" cy="14" r="2" />
                  </svg>
                </div>
              </div>
              <div className="mt-6 h-px bg-[#e6e6e9]" />
              <H c="-ml-px mt-[25px]">Assigned project runners</H>
              <div className="mt-[20px] flex h-6 items-start">
                <svg width="16" height="16" viewBox="0 0 16 16" className="mt-[3px]">
                  <path d="M6.500 1.200q1.500-1.700 3 0l6.200 11.500q.8 2.300-1.500 2.300H1.800Q-.5 15 .3 12.700Z" fill="#333238" />
                  <path d="M8 5v4.500M8 11v2" stroke="#fff" strokeWidth="1.800" />
                </svg>
                <span className="ml-[3px]">
                  <A>#2 (McZpszA_v)</A>
                </span>
                <div className="ml-auto flex h-6">
                  <div className="flex w-[24px] items-center justify-center rounded-l-[4px] border border-[#bfbfc3] text-[#737278]">
                    <Ico w={1.400}>
                      <path d="m1.500 14.500.8-4L10.800 2q1.200-1.100 2.500 0l.7.700q1.100 1.300 0 2.500L5.500 13.700ZM9.500 3.500l3 3" />
                    </Ico>
                  </div>
                  <div className="flex w-[22px] items-center justify-center gap-[3px] border-y border-[#bfbfc3]">
                    <div className="h-[11px] w-[3px] bg-[#737278]" />
                    <div className="h-[11px] w-[3px] bg-[#737278]" />
                  </div>
                  <div className="flex w-[117px] items-center justify-center rounded-r-[4px] border border-[#c91c00] bg-[#dd2b0e] pb-[1px] text-white">Remove runner</div>
                </div>
              </div>
              <div className="mt-[7px] flex">
                <span className="h-4 w-[37px] rounded-full bg-[#cbe2f9] text-center text-[12px] leading-[17px] text-[#0b5cad]">test</span>
              </div>
            </div>
            <div className="w-[554px]">
              <H>Instance runners</H>
              <div className="mt-[10px] h-[52px] bg-[#e9f3fc] px-4 pt-[15px]">
                <A>These runners</A> are available to all groups and projects.
              </div>
              <p className="mt-[13px] font-semibold">Enable instance runners for this project</p>
              <div className="mt-[6px] flex h-6 w-12 items-center justify-end rounded-full bg-[#1f75cb] pr-[2px]">
                <div className="flex size-5 items-center justify-center rounded-full bg-white text-[#1f75cb]">
                  <Ico s={12} w={1.600} vb="0 0 12 12">
                    <path d="m1.800 6.300 2.700 3 5.500-6.500" />
                  </Ico>
                </div>
              </div>
              <p>This GitLab instance does not provide any instance runners yet. Administrators can register instance runners in the admin area.</p>
              <H c="mt-[11px]">Group runners</H>
              <div className="mt-[10px] h-[92px] bg-[#fdf1dd] px-4 pt-[15px]">
                <p>These runners are shared across projects in this group.</p>
                <p className="mt-[19px]">
                  Group runners can be managed with the <A>Runner API</A>.
                </p>
              </div>
              <p className="mt-4">This project does not belong to a group and cannot make use of group runners.</p>
            </div>
          </div>
          <Section title="Artifacts">A job artifact is an archive of files and directories saved by a job when it finishes.</Section>
          <Section title="Variables">
            Variables store information that you can use in job scripts. Each project can define a maximum of 8000 variables. <A>Learn more.</A>
          </Section>
          <Section title="Pipeline trigger tokens" last>
            Trigger a pipeline for a branch or tag by generating a trigger token and using it with an API call. The token impersonates a user's project access and permissions. <A>Learn more.</A>
          </Section>
        </div>
      </div>
    </div>
  );
}

export default function App() {
  return (
    <div className="flex h-[1080px] w-[1920px] flex-col overflow-hidden font-['Noto_Sans',sans-serif]">
      <TopBar />
      <div className="flex min-h-0 flex-1">
        <Dock />
        <div className="flex min-w-0 flex-1 flex-col">
          <TabStrip />
          <NavBar />
          <div className="flex min-h-0 flex-1 border-t border-[#e2e2e6]">
            <BrowserRail />
            <div className="-mt-px flex min-w-0 flex-1 font-['Inter',sans-serif]">
              <GitLabSidebar />
              <Content />
            </div>
          </div>
        </div>
      </div>
    </div>
  );
}
